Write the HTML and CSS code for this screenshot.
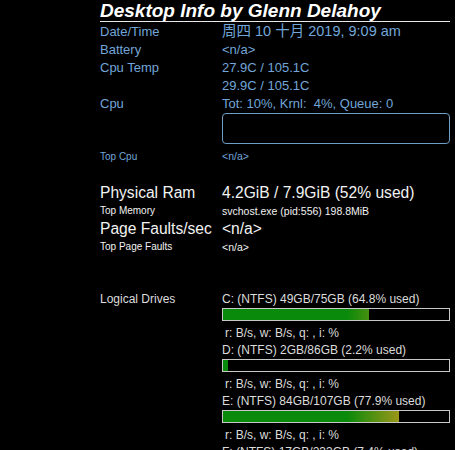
FILE: index.html
```html
<!DOCTYPE html>
<html>
<head>
<meta charset="utf-8">
<link rel="stylesheet" href="styles.css">
</head>
<body>
<div class="panel">
  <div class="title">Desktop Info by Glenn Delahoy</div>
  <div class="grid">
    <div class="lbl blue date-row">Date/Time</div>
    <div class="val blue date-row date">周四 10 十月 2019, 9:09 am</div>

    <div class="lbl blue">Battery</div>
    <div class="val blue">&lt;n/a&gt;</div>

    <div class="lbl blue">Cpu Temp</div>
    <div class="val blue">27.9C / 105.1C</div>

    <div class="lbl blue"></div>
    <div class="val blue">29.9C / 105.1C</div>

    <div class="lbl blue">Cpu</div>
    <div class="val blue">Tot: 10%, Krnl:&nbsp; 4%, Queue: 0</div>

    <div class="lbl"></div>
    <div class="cpu-box"></div>

    <div class="lbl blue small topcpu">Top Cpu</div>
    <div class="val blue smallv topcpu">&lt;n/a&gt;</div>

    <div class="lbl white big ram">Physical Ram</div>
    <div class="val white big ram">4.2GiB / 7.9GiB (52% used)</div>

    <div class="lbl white small tight">Top Memory</div>
    <div class="val white smallv tight">svchost.exe (pid:556) 198.8MiB</div>

    <div class="lbl white big">Page Faults/sec</div>
    <div class="val white big">&lt;n/a&gt;</div>

    <div class="lbl white small tight">Top Page Faults</div>
    <div class="val white smallv tight">&lt;n/a&gt;</div>

    <div class="lbl gray drives-lbl">Logical Drives</div>
    <div class="drives">
      <div class="drive">
        <div class="drive-name">C: (NTFS) 49GB/75GB (64.8% used)</div>
        <div class="bar"><div class="rest" style="width:35.2%"></div></div>
        <div class="io">r: B/s, w: B/s, q: , i: %</div>
      </div>
      <div class="drive">
        <div class="drive-name">D: (NTFS) 2GB/86GB (2.2% used)</div>
        <div class="bar"><div class="rest" style="width:97.8%"></div></div>
        <div class="io">r: B/s, w: B/s, q: , i: %</div>
      </div>
      <div class="drive">
        <div class="drive-name">E: (NTFS) 84GB/107GB (77.9% used)</div>
        <div class="bar"><div class="rest" style="width:22.1%"></div></div>
        <div class="io">r: B/s, w: B/s, q: , i: %</div>
      </div>
      <div class="drive">
        <div class="drive-name">F: (NTFS) 17GB/233GB (7.4% used)</div>
        <div class="bar"><div class="rest" style="width:92.6%"></div></div>
        <div class="io">r: B/s, w: B/s, q: , i: %</div>
      </div>
    </div>
  </div>
</div>
</body>
</html>
```

FILE: styles.css
```css
html, body {
  margin: 0;
  padding: 0;
  background: #000;
  overflow: hidden;
}
body {
  font-family: "Liberation Sans", Arial, sans-serif;
  width: 455px;
  height: 450px;
}
.panel {
  margin-left: 100px;
  width: 350px;
}
.title {
  font-size: 19px;
  font-weight: bold;
  font-style: italic;
  line-height: 21px;
  color: #ffffff;
  border-bottom: 1px solid #e8e8e8;
  white-space: nowrap;
}
.grid {
  display: grid;
  grid-template-columns: 122px 228px;
  align-items: start;
}
.lbl, .val {
  font-size: 13px;
  line-height: 18px;
  white-space: nowrap;
}
.blue { color: #72a6d8; }
.white { color: #f2f2f2; }
.gray { color: #dcdcdc; }
.date-row { line-height: 19px; }
.date {
  font-family: "Liberation Sans", "Noto Sans CJK SC", sans-serif;
  font-size: 14.5px;
}
.cpu-box {
  height: 29px;
  border: 1px solid #6e9ec4;
  border-radius: 4px;
}
.small {
  font-size: 10px;
  line-height: 13px;
}
.smallv {
  font-size: 10.5px;
  line-height: 13px;
}
.topcpu { margin-top: 6px; }
.big {
  font-size: 15.6px;
  line-height: 20px;
}
.ram { margin-top: 20px; }
.tight { line-height: 16px; }
.drives-lbl {
  font-size: 12px;
  line-height: 16px;
  margin-top: 36px;
}
.drives {
  margin-top: 36px;
  display: flex;
  flex-direction: column;
  gap: 1px;
  color: #dcdcdc;
  font-size: 12px;
}
.drive {
  display: flex;
  flex-direction: column;
}
.drive-name, .io {
  line-height: 16px;
  white-space: nowrap;
}
.bar {
  margin-top: 1px;
  height: 11px;
  border: 1px solid #c8c8c8;
  display: flex;
  justify-content: flex-end;
  background: linear-gradient(to right, #0a8a0a 0%, #0a8a0a 55%, #a8981a 80%, #c06a10 100%);
}
.rest {
  height: 100%;
  background: #000;
}
.io {
  margin-top: 4px;
  padding-left: 3px;
}
```
